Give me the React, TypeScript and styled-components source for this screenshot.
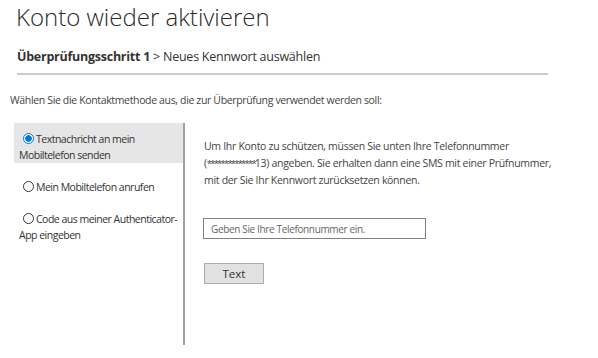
import React, { useState } from 'react';
import styled, { createGlobalStyle } from 'styled-components';

const GlobalStyle = createGlobalStyle`
  html, body {
    margin: 0;
    padding: 0;
    background: #fff;
  }
  body {
    font-family: "Open Sans", "Noto Sans", sans-serif;
    color: #333;
  }
`;

const options = [
  { id: 'sms', label: 'Textnachricht an mein Mobiltelefon senden' },
  { id: 'call', label: 'Mein Mobiltelefon anrufen' },
  { id: 'app', label: 'Code aus meiner Authenticator-App eingeben' },
];

const App: React.FC = () => {
  const [selected, setSelected] = useState('sms');

  return (
    <>
      <GlobalStyle />
      <Page>
        <Title>Konto wieder aktivieren</Title>
        <StepBar>
          <strong>Überprüfungsschritt 1</strong> &gt; Neues Kennwort auswählen
        </StepBar>
        <Intro>Wählen Sie die Kontaktmethode aus, die zur Überprüfung verwendet werden soll:</Intro>
        <Body>
          <OptionList>
            {options.map((o) => (
              <Option key={o.id} $active={selected === o.id} onClick={() => setSelected(o.id)}>
                <Radio $checked={selected === o.id} />
                {o.label}
              </Option>
            ))}
          </OptionList>
          <Details>
            <Info>
              Um Ihr Konto zu schützen, müssen Sie unten Ihre Telefonnummer
              (<Masked>**************</Masked>13) angeben. Sie erhalten dann eine SMS mit einer Prüfnummer,
              mit der Sie Ihr Kennwort zurücksetzen können.
            </Info>
            <PhoneInput placeholder="Geben Sie Ihre Telefonnummer ein." />
            <SendButton>Text</SendButton>
          </Details>
        </Body>
      </Page>
    </>
  );
};

export default App;

// Styled Components

const Page = styled.div`
  width: 598px;
  height: 358px;
  overflow: hidden;
`;

const Title = styled.h1`
  margin: 0;
  padding: 0 0 0 16px;
  font-size: 24px;
  font-weight: 300;
  line-height: 34px;
  color: #2b2b2b;
`;

const StepBar = styled.div`
  margin: 13px 0 0 17px;
  width: 531px;
  padding-bottom: 6px;
  border-bottom: 2px solid #cccccc;
  font-size: 12.5px;
  letter-spacing: -0.25px;
  line-height: 20px;
  color: #333;

  strong {
    font-weight: 700;
  }
`;

const Intro = styled.p`
  margin: 17px 0 0 10px;
  font-size: 10.5px;
  letter-spacing: -0.35px;
  line-height: 16px;
  color: #444;
`;

const Body = styled.div`
  display: flex;
  margin: 15px 0 0 14px;
`;

const OptionList = styled.div`
  width: 169px;
  height: 222px;
  border-right: 2px solid #a0a0a0;
  display: flex;
  flex-direction: column;
  gap: 8px;
`;

const Option = styled.div<{ $active: boolean }>`
  padding: 8px 0 0 5px;
  font-size: 10.5px;
  letter-spacing: -0.5px;
  line-height: 16px;
  color: #333;
  cursor: pointer;
  background: ${({ $active }) => ($active ? '#e6e6e6' : 'transparent')};
`;

const Radio = styled.span<{ $checked: boolean }>`
  display: inline-block;
  box-sizing: border-box;
  width: 11px;
  height: 11px;
  margin: 0 2px 0 4px;
  vertical-align: -1px;
  border-radius: 50%;
  border: 1px solid ${({ $checked }) => ($checked ? '#0078d7' : '#333')};
  background: ${({ $checked }) =>
    $checked ? 'radial-gradient(circle, #0078d7 0 3px, #fff 3.5px)' : '#fff'};
`;

const Details = styled.div`
  padding: 15px 0 0 19px;
  display: flex;
  flex-direction: column;
  align-items: flex-start;
`;

const Info = styled.p`
  margin: 0;
  width: 352px;
  font-size: 10.5px;
  letter-spacing: -0.3px;
  line-height: 17px;
  color: #444;
`;

const Masked = styled.span`
  font-size: 9.5px;
  letter-spacing: -1.8px;
`;

const PhoneInput = styled.input`
  box-sizing: border-box;
  margin: 29px 0 0 -1px;
  width: 223px;
  height: 21px;
  padding: 0 7px;
  border: 1px solid #808080;
  font-family: inherit;
  font-size: 10px;
  letter-spacing: -0.35px;
  color: #333;
  outline: none;

  &::placeholder {
    color: #666;
  }
`;

const SendButton = styled.button`
  box-sizing: border-box;
  margin-top: 24px;
  width: 60px;
  height: 21px;
  padding: 0;
  background: #e1e1e1;
  border: 1px solid #adadad;
  font-family: inherit;
  font-size: 11.5px;
  color: #333;
  cursor: pointer;
`;
